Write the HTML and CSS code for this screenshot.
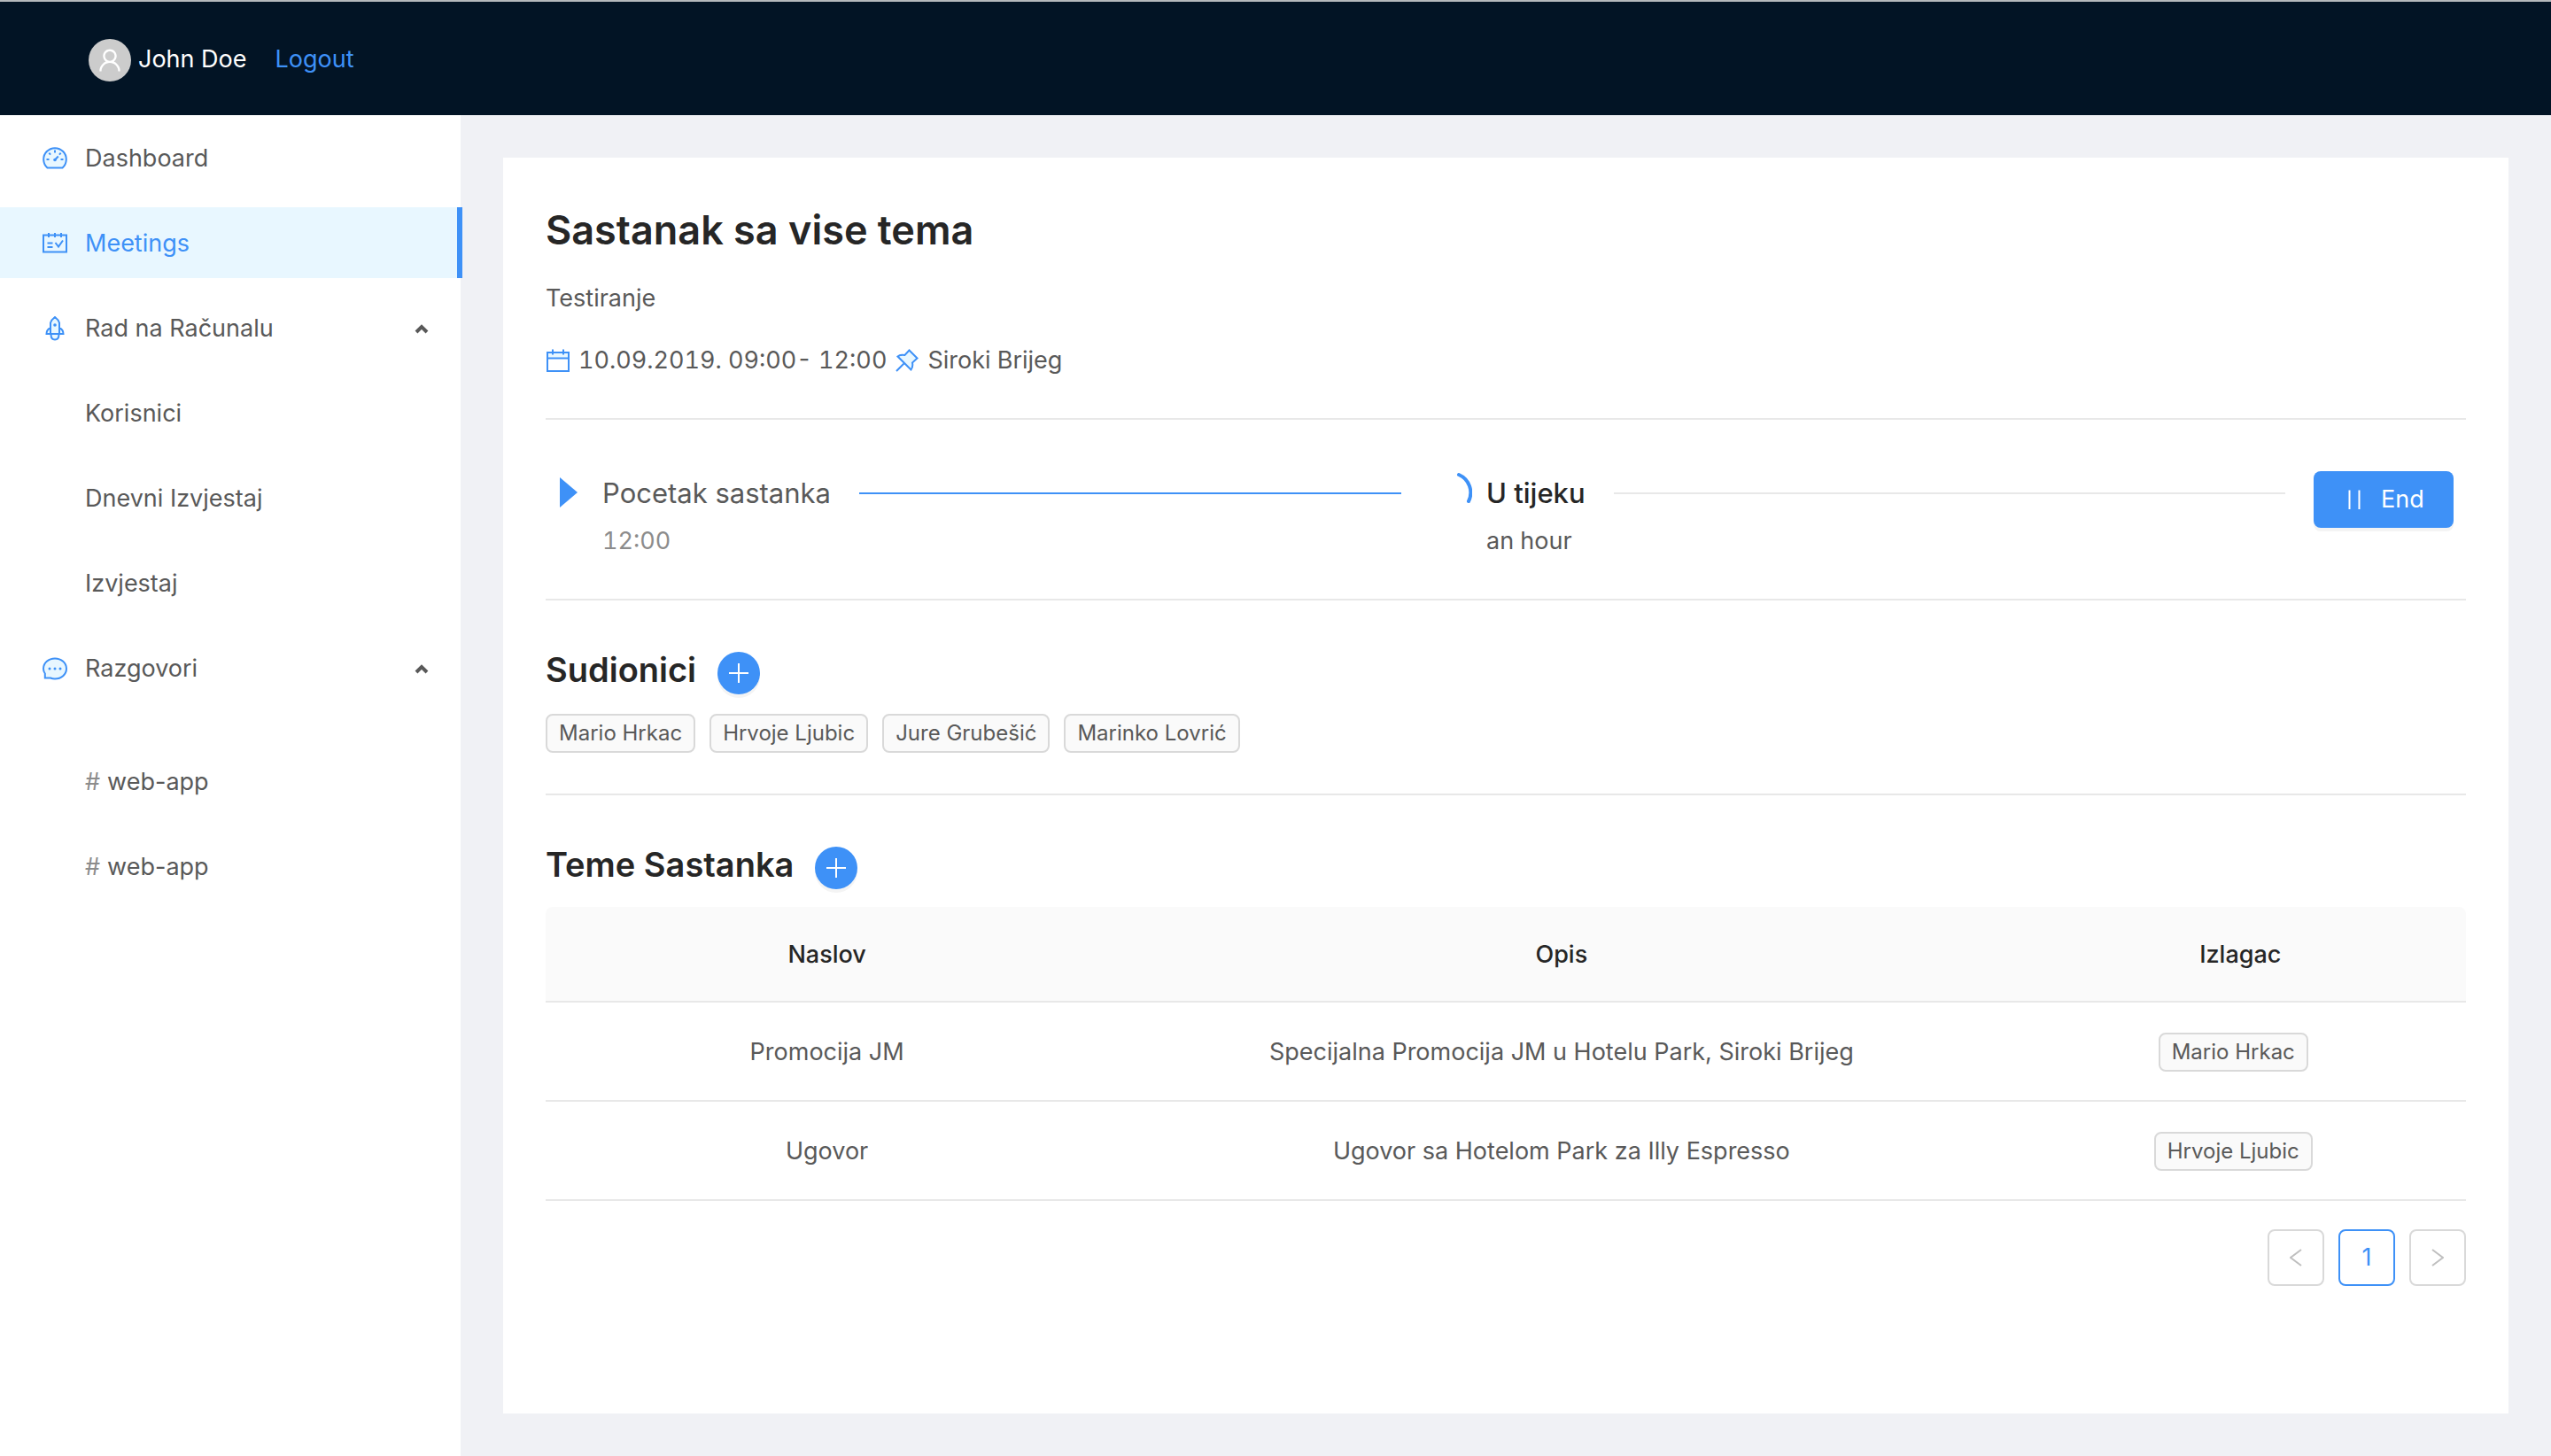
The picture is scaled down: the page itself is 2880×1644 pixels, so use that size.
FILE: index.html
```html
<!DOCTYPE html>
<html lang="hr">
<head>
<meta charset="utf-8">
<title>Sastanak sa vise tema</title>
<link rel="stylesheet" href="styles.css">
</head>
<body>
<header class="topbar">
  <span class="avatar"><svg class="icon" viewBox="0 0 1024 1024"><path d="M858.5 763.6a374 374 0 0 0-80.6-119.5 375.63 375.63 0 0 0-119.5-80.6c-.4-.2-.8-.3-1.2-.5C719.5 518 760 444.7 760 362c0-137-111-248-248-248S264 225 264 362c0 82.7 40.5 156 102.8 201.1-.4.2-.8.3-1.2.5-44.8 18.9-85 46-119.5 80.6a375.63 375.63 0 0 0-80.6 119.5A371.7 371.7 0 0 0 136 901.8a8 8 0 0 0 8 8.2h60c4.4 0 7.9-3.5 8-7.8 2-77.2 33-149.5 87.8-204.3 56.7-56.7 132-87.9 212.2-87.9s155.5 31.2 212.2 87.9C779 752.7 810 825 812 902.2c.1 4.4 3.6 7.8 8 7.8h60a8 8 0 0 0 8-8.2c-1-47.8-10.9-94.3-29.5-138.2zM512 534c-45.9 0-89.1-17.9-121.6-50.4S340 407.9 340 362c0-45.9 17.9-89.1 50.4-121.6S466.1 190 512 190s89.1 17.9 121.6 50.4S684 316.1 684 362c0 45.9-17.9 89.1-50.4 121.6S557.9 534 512 534z"/></svg></span>
  <span class="user-name">John Doe</span>
  <a class="logout" href="#">Logout</a>
</header>
<div class="shell">
  <nav class="sidebar">
    <ul class="menu">
      <li><a class="menu-item" href="#">
        <svg class="icon two-tone" viewBox="0 0 28 28"><path d="M5.5 24.5A12.8 12.8 0 1 1 22.5 24.5Z"/><path d="M14 4.5v3M7.3 7.800l1.800 1.800M20.700 7.800l-1.800 1.800M4.500 15h3M20.500 15h3M14 15.500l3.800-4"/><circle class="dot" cx="14" cy="15.500" r="1.800"/></svg>
        <span>Dashboard</span></a></li>
      <li><a class="menu-item selected" href="#">
        <svg class="icon two-tone" viewBox="0 0 28 28"><path d="M1 4.500h26v19H1z"/><path d="M7 2v5M14 2v5M21 2v5M5.500 13.500h6M5.500 18h6M14.500 13l3.500 4.500 5-7"/></svg>
        <span>Meetings</span></a></li>
      <li><button class="menu-item" type="button" aria-expanded="true">
        <svg class="icon two-tone" viewBox="0 0 28 28"><path d="M9 20H4.500C4.500 16.500 6 14.500 9 13.500M19 20h4.500c0-3.500-1.500-5.500-4.500-6.500M9 20V7.500C10 4.500 12 2.500 14 1c2 1.500 4 3.500 5 6.500V20zM9.500 20.500c0 4 2 6 4.500 6s4.500-2 4.500-6"/><circle class="dot" cx="14" cy="10" r="1.800"/></svg>
        <span>Rad na Računalu</span>
        <svg class="chevron" viewBox="0 0 16 12"><path d="M2 10l6-6 6 6"/></svg></button></li>
      <li><a class="menu-item nested" href="#">Korisnici</a></li>
      <li><a class="menu-item nested" href="#">Dnevni Izvjestaj</a></li>
      <li><a class="menu-item nested" href="#">Izvjestaj</a></li>
      <li><button class="menu-item" type="button" aria-expanded="true">
        <svg class="icon two-tone" viewBox="0 0 28 28"><path d="M14 2.500c7.200 0 13 5 13 11.500s-5.800 11.500-13 11.500c-2 0-3.500-.3-5-1H2.800v-5C1.600 18 1 16 1 14 1 7.500 6.800 2.500 14 2.500z"/><circle class="dot" cx="8" cy="14" r="1.500"/><circle class="dot" cx="14" cy="14" r="1.500"/><circle class="dot" cx="20" cy="14" r="1.500"/></svg>
        <span>Razgovori</span>
        <svg class="chevron" viewBox="0 0 16 12"><path d="M2 10l6-6 6 6"/></svg></button></li>
    </ul>
    <ul class="menu channels">
      <li><a class="menu-item nested" href="#"><span class="hash">#</span>web-app</a></li>
      <li><a class="menu-item nested" href="#"><span class="hash">#</span>web-app</a></li>
    </ul>
  </nav>
  <main class="content">
    <article class="card">
      <section class="summary">
        <h1>Sastanak sa vise tema</h1>
        <p>Testiranje</p>
        <p class="meta">
          <svg class="icon two-tone" viewBox="0 0 28 28"><path class="pale" d="M2 5h24v7H2z"/><path class="open" d="M2 5h24v21H2zM2 11.500h24M8 1.500v6M20 1.500v6"/></svg>
          <span>10.09.2019. 09:00- 12:00</span>
          <svg class="icon two-tone" viewBox="0 0 28 28"><path d="M16.500 2.500l9 9-5.500 5c.8 3.500 0 6-1.500 8L3.500 9.500c2-1.500 4.500-2.300 8-1.500zM10.500 17.500l-8.500 8.500"/></svg>
          <span>Siroki Brijeg</span>
        </p>
      </section>
      <section class="steps">
        <div class="step done">
          <span class="step-icon"><svg class="play" viewBox="0 0 20 34"><path d="M0 0l20 17L0 34z"/></svg></span>
          <div class="step-body"><h3>Pocetak sastanka</h3><p>12:00</p></div>
        </div>
        <div class="step active">
          <span class="step-icon"><svg class="spinner" viewBox="0 0 48 48"><path d="M33 4A22 22 0 0 1 44 34"/></svg></span>
          <div class="step-body"><h3>U tijeku</h3><p>an hour</p></div>
        </div>
        <button class="end-button" type="button"><svg class="icon" viewBox="0 0 28 28"><path d="M8.500 3.500v21.500M19.500 3.500v21.500"/></svg><span>End</span></button>
      </section>
      <section class="people">
        <div class="section-head"><h2>Sudionici</h2><button class="add" type="button" aria-label="Dodaj sudionika"><svg viewBox="0 0 22 22"><path d="M11 0v22M0 11h22"/></svg></button></div>
        <div class="tags"><span class="tag">Mario Hrkac</span><span class="tag">Hrvoje Ljubic</span><span class="tag">Jure Grubešić</span><span class="tag">Marinko Lovrić</span></div>
      </section>
      <section class="topics">
        <div class="section-head"><h2>Teme Sastanka</h2><button class="add" type="button" aria-label="Dodaj temu"><svg viewBox="0 0 22 22"><path d="M11 0v22M0 11h22"/></svg></button></div>
        <table>
          <colgroup><col class="col-title"><col class="col-text"><col></colgroup>
          <thead><tr><th>Naslov</th><th>Opis</th><th>Izlagac</th></tr></thead>
          <tbody>
            <tr><td>Promocija JM</td><td>Specijalna Promocija JM u Hotelu Park, Siroki Brijeg</td><td><span class="tag">Mario Hrkac</span></td></tr>
            <tr><td>Ugovor</td><td>Ugovor sa Hotelom Park za Illy Espresso</td><td><span class="tag">Hrvoje Ljubic</span></td></tr>
          </tbody>
        </table>
        <nav class="pagination">
          <button type="button" disabled aria-label="Prethodna"><svg viewBox="0 0 14 20"><path d="M13 1L1 10l12 9"/></svg></button>
          <button class="current" type="button">1</button>
          <button type="button" disabled aria-label="Sljedeća"><svg viewBox="0 0 14 20"><path d="M1 1l12 9-12 9"/></svg></button>
        </nav>
      </section>
    </article>
  </main>
</div>
</body>
</html>
```
FILE: styles.css
```css
:root {
  --primary: #3e91f7;
  --pale: #e8f7ff;
  --text: #595959;
  --heading: #262626;
  --line: #e8e8e8;
  --border: #d9d9d9;
}

* { box-sizing: border-box; }

body {
  margin: 0;
  min-height: 100vh;
  display: flex;
  flex-direction: column;
  background: #f0f1f5;
  color: var(--text);
  font: 27px/42px Inter, "Liberation Sans", sans-serif;
}

h1, h2, h3, p, ul { margin: 0; padding: 0; }
ul { list-style: none; }
a { color: inherit; text-decoration: none; }
button { font: inherit; color: inherit; background: none; border: 0; padding: 0; cursor: pointer; }
svg { display: block; flex: none; fill: none; stroke: currentColor; stroke-width: 2; }

.icon { width: 28px; height: 28px; }
.two-tone { color: var(--primary); fill: var(--pale); }
.two-tone .dot { fill: currentColor; stroke: none; }
.two-tone .open { fill: none; }
.two-tone .pale { stroke: none; }

.topbar {
  display: flex;
  align-items: center;
  height: 130px;
  padding: 4px 100px 0;
  border-top: 2px solid #b4b9bc;
  background: #021425;
  color: #fff;
}
.avatar {
  display: grid;
  place-items: center;
  width: 48px;
  height: 48px;
  margin-right: 8px;
  border-radius: 50%;
  background: #ccc;
}
.avatar .icon { width: 32px; height: 32px; fill: #fff; stroke: none; }
.user-name, .logout { padding-bottom: 2px; }
.logout { margin-left: 32px; color: var(--primary); }

.shell { flex: 1; display: flex; }

.sidebar { flex: none; width: 520px; padding-top: 8px; background: #fff; }
.menu { display: flex; flex-direction: column; gap: 16px; }
.channels { margin-top: 48px; }
.menu-item {
  display: flex;
  align-items: center;
  width: 100%;
  height: 80px;
  padding: 2px 36px 0 48px;
  gap: 20px;
  text-align: left;
}
.menu-item.nested { padding-left: 96px; gap: 8px; }
.menu-item.selected {
  width: calc(100% + 2px);
  border-right: 6px solid var(--primary);
  background: var(--pale);
  color: var(--primary);
}
.chevron { width: 16px; height: 12px; margin-left: auto; stroke-width: 4; }
.hash { color: #8c8c8c; }

.content { flex: 1; min-width: 0; display: flex; padding: 48px; }
.card { flex: 1; min-width: 0; padding: 48px; background: #fff; }

.summary { padding-bottom: 44px; border-bottom: 2px solid var(--line); }
h1 { font-size: 45px; line-height: 68px; font-weight: 600; color: var(--heading); }
.summary p { margin-top: 22px; }
.meta { display: flex; align-items: center; gap: 9px; font-variant-numeric: tabular-nums; }
.summary .meta { margin-top: 28px; }

.steps {
  display: flex;
  align-items: flex-start;
  padding: 58px 14px 44px 0;
  border-bottom: 2px solid var(--line);
}
.step { display: flex; flex: 1; min-width: 0; margin-right: 32px; }
.step-icon { flex: none; width: 48px; height: 48px; margin-right: 16px; }
.play { width: 20px; height: 34px; margin: 7px 16px; fill: var(--primary); stroke: none; }
.spinner { width: 48px; height: 48px; color: var(--primary); stroke-width: 4; stroke-linecap: round; }
.step-body { flex: 1; }
.step-body p { margin-top: 8px; font-variant-numeric: tabular-nums; }
h3 { display: flex; align-items: center; gap: 32px; font-size: 31px; line-height: 50px; font-weight: 400; }
h3::after { content: ""; flex: 1; height: 2px; background: var(--line); }
.done h3::after { background: var(--primary); }
.done p { color: #8c8c8c; }
.active h3 { color: var(--heading); font-weight: 500; }
.end-button {
  display: flex;
  align-items: center;
  gap: 16px;
  min-width: 158px;
  height: 64px;
  padding: 0 32px;
  border-radius: 8px;
  background: var(--primary);
  color: #fff;
  box-shadow: 0 4px 0 #f4f4f4;
}

.people { padding: 46px 0; border-bottom: 2px solid var(--line); }
.topics { padding-top: 46px; }
.section-head { display: flex; align-items: center; gap: 24px; }
h2 { padding-bottom: 8px; font-size: 38px; line-height: 64px; font-weight: 600; color: var(--heading); }
.add {
  display: grid;
  place-items: center;
  width: 48px;
  height: 48px;
  border-radius: 50%;
  background: var(--primary);
  color: #fff;
  box-shadow: 0 4px 0 #f4f4f4;
}
.add svg { width: 22px; height: 22px; }
.tags { display: flex; gap: 16px; margin-top: 10px; }
.tag {
  display: inline-block;
  padding: 0 13px;
  border: 2px solid var(--border);
  border-radius: 8px;
  background: #fafafa;
  font-size: 24px;
  line-height: 40px;
}

table { width: 100%; margin-top: 8px; border-collapse: separate; border-spacing: 0; table-layout: fixed; }
.col-title { width: 29.3%; }
.col-text { width: 47.2%; }
th, td { padding: 2px 32px 0; border-bottom: 2px solid var(--line); text-align: center; }
th { height: 108px; background: #fafafa; color: var(--heading); font-weight: 500; }
th:first-child { border-top-left-radius: 8px; }
th:last-child { border-top-right-radius: 8px; }
td { height: 112px; }
td .tag { margin-right: 16px; vertical-align: middle; }

.pagination { display: flex; justify-content: flex-end; gap: 16px; margin-top: 32px; }
.pagination button {
  display: grid;
  place-items: center;
  width: 64px;
  height: 64px;
  border: 2px solid var(--border);
  border-radius: 8px;
  color: #bfbfbf;
}
.pagination .current { border-color: var(--primary); color: var(--primary); }
.pagination svg { width: 14px; height: 20px; }
```
